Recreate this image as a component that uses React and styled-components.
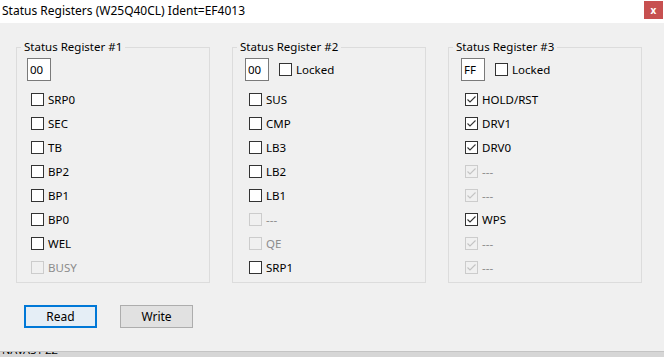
import styled, { createGlobalStyle } from "styled-components"

const GlobalStyle = createGlobalStyle`
    html, body {
        margin: 0;
        padding: 0;
        background: #f0f0f0;
    }
    body {
        font-family: "Noto Sans", "Open Sans", "Liberation Sans", sans-serif;
        font-size: 12px;
        color: #000000;
    }
`

const registers = [
    {
        title: "Status Register #1",
        value: "00",
        locked: null,
        bits: [
            { name: "SRP0" },
            { name: "SEC" },
            { name: "TB" },
            { name: "BP2" },
            { name: "BP1" },
            { name: "BP0" },
            { name: "WEL" },
            { name: "BUSY", disabled: true },
        ],
    },
    {
        title: "Status Register #2",
        value: "00",
        locked: false,
        bits: [
            { name: "SUS" },
            { name: "CMP" },
            { name: "LB3" },
            { name: "LB2" },
            { name: "LB1" },
            { name: "---", disabled: true },
            { name: "QE", disabled: true },
            { name: "SRP1" },
        ],
    },
    {
        title: "Status Register #3",
        value: "FF",
        locked: false,
        bits: [
            { name: "HOLD/RST", checked: true },
            { name: "DRV1", checked: true },
            { name: "DRV0", checked: true },
            { name: "---", checked: true, disabled: true },
            { name: "---", checked: true, disabled: true },
            { name: "WPS", checked: true },
            { name: "---", checked: true, disabled: true },
            { name: "---", checked: true, disabled: true },
        ],
    },
]

const CheckBox = ({ label, checked, disabled }) => (
    <CheckRow $disabled={disabled}>
        <Box $disabled={disabled}>
            {checked && (
                <svg width="11" height="11" viewBox="0 0 11 11">
                    <polyline
                        points="1.5,5.5 4,8 9.5,2.5"
                        fill="none"
                        stroke={disabled ? "#c4c4c4" : "#333333"}
                        strokeWidth="1.1"
                    />
                </svg>
            )}
        </Box>
        <span>{label}</span>
    </CheckRow>
)

const App = () => {
    return (
        <Window>
            <GlobalStyle />
            <TitleBar>
                <Title>Status Registers (W25Q40CL) Ident=EF4013</Title>
                <CloseBtn>x</CloseBtn>
            </TitleBar>

            <Body>
                <Groups>
                    {registers.map((reg, gi) => (
                        <Group key={reg.title}>
                            <Legend>{reg.title}</Legend>
                            <GroupInner $first={gi === 0}>
                                <ValueRow>
                                    <ValueBox>{reg.value}</ValueBox>
                                    {reg.locked !== null && <CheckBox label="Locked" checked={reg.locked} />}
                                </ValueRow>
                                <Bits>
                                    {reg.bits.map((bit, i) => (
                                        <CheckBox key={i} label={bit.name} checked={bit.checked} disabled={bit.disabled} />
                                    ))}
                                </Bits>
                            </GroupInner>
                        </Group>
                    ))}
                </Groups>

                <Buttons>
                    <Button $focused>Read</Button>
                    <Button>Write</Button>
                </Buttons>
            </Body>

            <Footer>
                <FooterText>NAVAS1 ZZ</FooterText>
            </Footer>
        </Window>
    )
}

// Styles
const Window = styled.div`
    width: 664px;
    height: 357px;
    display: flex;
    flex-direction: column;
    background: #f0f0f0;
    overflow: hidden;
`
const TitleBar = styled.div`
    height: 23px;
    background: #ffffff;
    display: flex;
    align-items: flex-start;
    justify-content: space-between;
`
const Title = styled.div`
    padding: 3px 0 0 2px;
    line-height: 16px;
`
const CloseBtn = styled.div`
    width: 19px;
    height: 18px;
    margin: 1px 1px 0 0;
    background: #c75050;
    color: #ffffff;
    font-size: 10px;
    font-weight: bold;
    display: flex;
    align-items: center;
    justify-content: center;
`
const Body = styled.div`
    flex: 1;
    padding: 16px 0 0 16px;
    font-size: 11.5px;
`
const Groups = styled.div`
    display: flex;
    gap: 22px;
`
const Group = styled.fieldset`
    width: 194px;
    height: 244px;
    box-sizing: border-box;
    margin: 0;
    padding: 3px 0 0 0;
    border: 1px solid #dcdcdc;
    min-width: 0;
`
const Legend = styled.legend`
    padding: 0 3px;
    margin-left: 4px;
    line-height: 16px;
`
const GroupInner = styled.div`
    padding-left: ${(p) => (p.$first ? "10px" : "12px")};
`
const ValueRow = styled.div`
    display: flex;
    align-items: center;
    gap: 10px;
    height: 23px;
`
const ValueBox = styled.div`
    width: 24px;
    height: 23px;
    box-sizing: border-box;
    border: 1px solid #7a7a7a;
    background: #ffffff;
    padding-left: 2px;
    line-height: 21px;
`
const Bits = styled.div`
    display: flex;
    flex-direction: column;
    gap: 11px;
    margin-top: 12px;
    padding-left: 4px;
`
const CheckRow = styled.label`
    display: flex;
    align-items: center;
    gap: 4px;
    height: 13px;
    color: ${(p) => (p.$disabled ? "#8c8c8c" : "#000000")};
`
const Box = styled.span`
    width: 13px;
    height: 13px;
    box-sizing: border-box;
    border: 1px solid ${(p) => (p.$disabled ? "#cccccc" : "#333333")};
    background: ${(p) => (p.$disabled ? "#f0f0f0" : "#ffffff")};
    display: flex;
    align-items: center;
    justify-content: center;
    flex-shrink: 0;
`
const Buttons = styled.div`
    display: flex;
    gap: 23px;
    margin: 22px 0 0 8px;
`
const Button = styled.button`
    width: 73px;
    height: 23px;
    box-sizing: border-box;
    font: inherit;
    font-size: 12px;
    color: #000000;
    padding: 0;
    background: ${(p) => (p.$focused ? "#e5eef6" : "#e1e1e1")};
    border: ${(p) => (p.$focused ? "2px solid #0078d7" : "1px solid #adadad")};
`
const Footer = styled.div`
    height: 5px;
    background: #d6d6d6;
    border-top: 1px solid #c4c4c4;
    overflow: hidden;
`
const FooterText = styled.div`
    margin: -8px 0 0 2px;
    line-height: 12px;
    font-size: 11px;
`

export default App
